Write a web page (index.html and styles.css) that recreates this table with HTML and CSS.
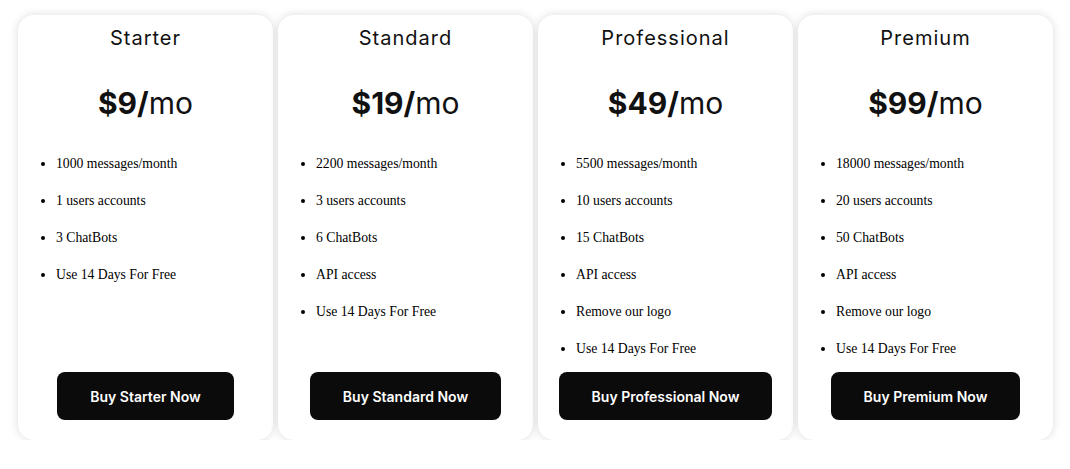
FILE: index.html
```html
<!DOCTYPE html>
<html>
<head>
<meta charset="utf-8">
<link rel="stylesheet" href="styles.css">
</head>
<body>
<div class="plans">
  <div class="card">
    <h2 class="name">Starter</h2>
    <div class="price"><b>$9/</b>mo</div>
    <ul class="features">
      <li>1000 messages/month</li>
      <li>1 users accounts</li>
      <li>3 ChatBots</li>
      <li>Use 14 Days For Free</li>
    </ul>
    <button class="buy">Buy Starter Now</button>
  </div>
  <div class="card">
    <h2 class="name">Standard</h2>
    <div class="price"><b>$19/</b>mo</div>
    <ul class="features">
      <li>2200 messages/month</li>
      <li>3 users accounts</li>
      <li>6 ChatBots</li>
      <li>API access</li>
      <li>Use 14 Days For Free</li>
    </ul>
    <button class="buy">Buy Standard Now</button>
  </div>
  <div class="card">
    <h2 class="name">Professional</h2>
    <div class="price"><b>$49/</b>mo</div>
    <ul class="features">
      <li>5500 messages/month</li>
      <li>10 users accounts</li>
      <li>15 ChatBots</li>
      <li>API access</li>
      <li>Remove our logo</li>
      <li>Use 14 Days For Free</li>
    </ul>
    <button class="buy">Buy Professional Now</button>
  </div>
  <div class="card">
    <h2 class="name">Premium</h2>
    <div class="price"><b>$99/</b>mo</div>
    <ul class="features">
      <li>18000 messages/month</li>
      <li>20 users accounts</li>
      <li>50 ChatBots</li>
      <li>API access</li>
      <li>Remove our logo</li>
      <li>Use 14 Days For Free</li>
    </ul>
    <button class="buy">Buy Premium Now</button>
  </div>
</div>
</body>
</html>
```

FILE: styles.css
```css
html, body {
  margin: 0;
  padding: 0;
  background: #ffffff;
}
body {
  padding: 15px 17px 0 18px;
}
.plans {
  display: grid;
  grid-template-columns: repeat(4, 255px);
  gap: 5px;
}
.card {
  height: 425px;
  box-sizing: border-box;
  background: #fff;
  border-radius: 16px;
  box-shadow: 0 0 10px rgba(0, 0, 0, 0.14);
  display: flex;
  flex-direction: column;
  align-items: center;
  padding: 10px 0 20px;
}
.name {
  margin: 0;
  font-family: Inter, "Liberation Sans", sans-serif;
  font-weight: 400;
  font-size: 20px;
  letter-spacing: 1px;
  line-height: 26px;
  color: #111;
}
.price {
  margin-top: 34px;
  font-family: Inter, "Liberation Sans", sans-serif;
  font-size: 30px;
  line-height: 36px;
  color: #111;
}
.price b {
  font-weight: 700;
}
.features {
  align-self: stretch;
  margin: 33px 0 0;
  padding: 0 0 0 38px;
  font-family: "Liberation Serif", "Times New Roman", serif;
  font-size: 13.7px;
  line-height: 19px;
  color: #000;
}
.features li {
  margin-bottom: 18px;
}
.features li:last-child {
  margin-bottom: 0;
}
.buy {
  margin-top: auto;
  flex-shrink: 0;
  height: 48px;
  padding: 0 33px;
  border: none;
  border-radius: 8px;
  background: #0b0b0b;
  color: #fff;
  font-family: Inter, "Liberation Sans", sans-serif;
  font-weight: 600;
  font-size: 14px;
}
```
